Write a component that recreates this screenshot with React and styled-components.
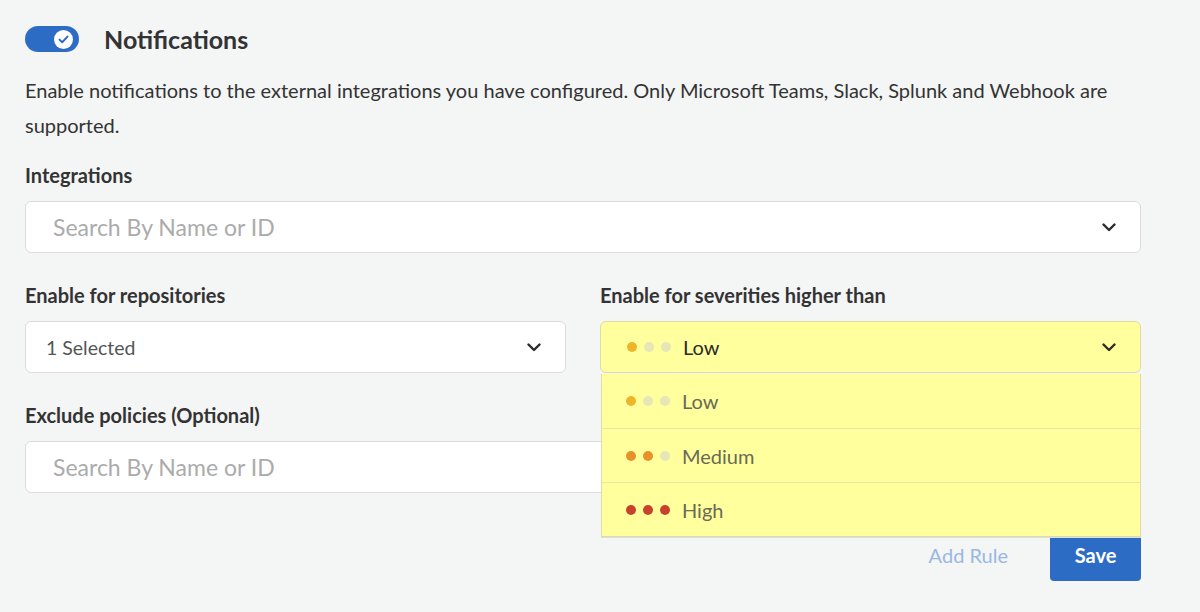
import React, { useState } from "react";
import styled, { createGlobalStyle } from "styled-components";

const GlobalStyle = createGlobalStyle`
  body {
    margin: 0;
    background: #f4f5f5;
    font-family: Lato, "Open Sans", sans-serif;
    color: #333;
  }
`;

const severities = [
  { label: "Low", level: 1, color: "#efb52a" },
  { label: "Medium", level: 2, color: "#e8912a" },
  { label: "High", level: 3, color: "#c8432b" },
];

function Chevron() {
  return (
    <ChevronIcon width="14" height="9" viewBox="0 0 14 9">
      <path
        d="M1.5 1.5 L7 7 L12.5 1.5"
        fill="none"
        stroke="#2b2b2b"
        strokeWidth="2.4"
        strokeLinecap="round"
        strokeLinejoin="round"
      />
    </ChevronIcon>
  );
}

function Dots({ level, color }) {
  return (
    <DotRow>
      {[1, 2, 3].map((i) => (
        <Dot key={i} color={i <= level ? color : "#e6e6b6"} />
      ))}
    </DotRow>
  );
}

export default function App() {
  const [enabled, setEnabled] = useState(true);
  const [severity, setSeverity] = useState(severities[0]);

  return (
    <Page>
      <GlobalStyle />
      <Header>
        <Toggle on={enabled} onClick={() => setEnabled(!enabled)}>
          <Knob>
            <svg width="11" height="9" viewBox="0 0 11 9">
              <path
                d="M1.5 4.6 L4.2 7.2 L9.5 1.6"
                fill="none"
                stroke="#2d6cc5"
                strokeWidth="2"
                strokeLinecap="round"
                strokeLinejoin="round"
              />
            </svg>
          </Knob>
        </Toggle>
        <Title>Notifications</Title>
      </Header>

      <Description>
        Enable notifications to the external integrations you have configured. Only Microsoft
        Teams, Slack, Splunk and Webhook are supported.
      </Description>

      <Field first>
        <Label>Integrations</Label>
        <Control>
          <Placeholder>Search By Name or ID</Placeholder>
          <Chevron />
        </Control>
      </Field>

      <Columns>
        <Field>
          <Label>Enable for repositories</Label>
          <Control compact>
            <Value>1 Selected</Value>
            <Chevron />
          </Control>
        </Field>
        <Field>
          <Label>Enable for severities higher than</Label>
          <SelectWrap>
            <Control highlight>
              <SeverityValue>
                <Dots level={severity.level} color={severity.color} />
                <Value dark>{severity.label}</Value>
              </SeverityValue>
              <Chevron />
            </Control>
            <Menu>
              {severities.map((s) => (
                <MenuItem key={s.label} onClick={() => setSeverity(s)}>
                  <Dots level={s.level} color={s.color} />
                  <span>{s.label}</span>
                </MenuItem>
              ))}
            </Menu>
          </SelectWrap>
        </Field>
      </Columns>

      <Field>
        <Label>Exclude policies (Optional)</Label>
        <Control>
          <Placeholder>Search By Name or ID</Placeholder>
        </Control>
      </Field>

      <Actions>
        <LinkButton>Add Rule</LinkButton>
        <SaveButton>Save</SaveButton>
      </Actions>
    </Page>
  );
}

const Page = styled.div`
  width: 1116px;
  padding: 26px 0 0 25px;
`;

const Header = styled.div`
  display: flex;
  align-items: center;
  gap: 25px;
`;

const Toggle = styled.div`
  width: 54px;
  height: 26px;
  border-radius: 13px;
  background: ${(props) => (props.on ? "#2d6cc5" : "#c9ccd1")};
  display: flex;
  align-items: center;
  justify-content: ${(props) => (props.on ? "flex-end" : "flex-start")};
  padding: 0 6px;
  box-sizing: border-box;
  cursor: pointer;
`;

const Knob = styled.div`
  width: 19px;
  height: 19px;
  border-radius: 50%;
  background: #fff;
  display: grid;
  place-items: center;
`;

const Title = styled.h2`
  margin: 0;
  font-size: 25px;
  line-height: 26px;
  font-weight: 700;
  color: #333;
`;

const Description = styled.p`
  margin: 21px 0 0;
  font-size: 20px;
  line-height: 35px;
  color: #333;
`;

const Field = styled.div`
  display: flex;
  flex-direction: column;
  margin-top: ${(props) => (props.first ? "20px" : "30px")};
`;

const Label = styled.label`
  font-size: 20px;
  font-weight: 700;
  line-height: 24px;
  color: #333;
  margin-bottom: 14px;
`;

const Columns = styled.div`
  display: grid;
  grid-template-columns: 1fr 1fr;
  gap: 34px;
  position: relative;
  z-index: 2;
`;

const Control = styled.div`
  height: 52px;
  box-sizing: border-box;
  display: flex;
  align-items: center;
  justify-content: space-between;
  padding: 0 24px 0 ${(props) => (props.compact ? "20px" : "26px")};
  background: ${(props) => (props.highlight ? "#ffff9e" : "#fff")};
  border: 1px solid ${(props) => (props.highlight ? "#dcdca4" : "#dcdcdc")};
  border-radius: 6px;
`;

const Placeholder = styled.span`
  font-size: 23px;
  color: #ababab;
  padding-left: 1px;
`;

const Value = styled.span`
  font-size: ${(props) => (props.dark ? "20px" : "19.5px")};
  color: ${(props) => (props.dark ? "#2b2b2b" : "#555")};
`;

const ChevronIcon = styled.svg`
  flex-shrink: 0;
`;

const SelectWrap = styled.div`
  position: relative;
`;

const SeverityValue = styled.div`
  display: flex;
  align-items: center;
  gap: 12px;
`;

const DotRow = styled.div`
  display: flex;
  gap: 7px;
`;

const Dot = styled.span`
  width: 10px;
  height: 10px;
  border-radius: 50%;
  background: ${(props) => props.color};
`;

const Menu = styled.div`
  position: absolute;
  top: 53px;
  left: 1px;
  right: 0;
  background: #ffff9e;
  border: 1px solid #dcdca4;
  border-top: none;
  box-shadow: 0 1px 0 #dedede;
`;

const MenuItem = styled.div`
  height: 54px;
  box-sizing: border-box;
  display: flex;
  align-items: center;
  gap: 12px;
  padding-left: 24px;
  font-size: 20px;
  color: #6a6a55;
  border-top: 1px solid #e6e6a8;
  cursor: pointer;

  &:first-child {
    border-top: none;
  }
`;

const Actions = styled.div`
  display: flex;
  justify-content: flex-end;
  align-items: center;
  gap: 42px;
  margin-top: 36px;
`;

const LinkButton = styled.button`
  background: none;
  border: none;
  padding: 0;
  font-family: inherit;
  font-size: 20px;
  color: #9ab7e4;
  cursor: pointer;
`;

const SaveButton = styled.button`
  width: 91px;
  height: 52px;
  border: none;
  border-radius: 4px;
  background: #2d6cc5;
  color: #fff;
  font-family: inherit;
  font-size: 20px;
  font-weight: 700;
  cursor: pointer;
`;
